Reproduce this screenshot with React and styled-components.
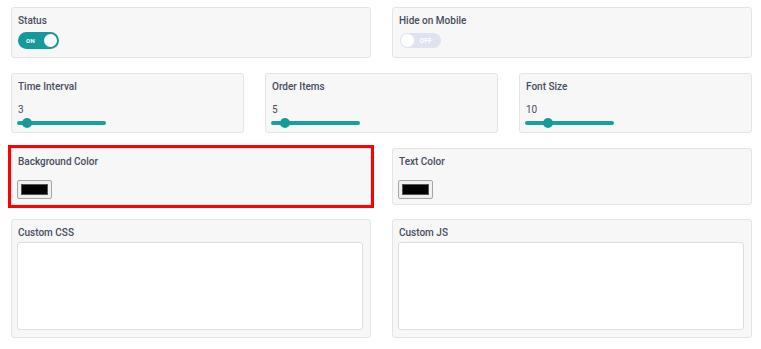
import React, { useState } from "react";
import styled, { createGlobalStyle } from "styled-components";

const GlobalStyle = createGlobalStyle`
  body {
    margin: 0;
    background: #ffffff;
    font-family: Roboto, "Liberation Sans", Arial, sans-serif;
  }
`;

const Page = styled.div`
  width: 761px;
  box-sizing: border-box;
  padding: 7px 9px 0 11px;
  display: flex;
  flex-direction: column;
  gap: 15px;
`;

const Row = styled.div`
  display: grid;
  grid-template-columns: repeat(${(p) => p.cols}, 1fr);
  column-gap: 21px;
  margin-top: ${(p) => p.pull || 0}px;
`;

const Card = styled.div`
  box-sizing: border-box;
  height: ${(p) => p.h}px;
  background: #f7f7f7;
  border: 1px solid #e4e4e4;
  border-radius: ${(p) => (p.highlight ? 0 : 3)}px;
  padding: 7px 7px 0 5px;
  display: flex;
  flex-direction: column;
  outline: ${(p) => (p.highlight ? "3px solid #ff0000" : "none")};
  outline-offset: 0;
`;

const Label = styled.div`
  font-size: 10px;
  line-height: 12px;
  font-weight: 500;
  color: #474c5e;
  padding-left: 1px;
`;

const Toggle = styled.div`
  margin-top: ${(p) => (p.on ? 5 : 6)}px;
  width: 41px;
  height: ${(p) => (p.on ? 17 : 15)}px;
  margin-left: ${(p) => (p.on ? 1 : 2)}px;
  border-radius: 10px;
  background: ${(p) => (p.on ? "#16999b" : "#e0e2f0")};
  display: flex;
  align-items: center;
  flex-direction: ${(p) => (p.on ? "row" : "row-reverse")};
  justify-content: space-between;
  padding: 0 2px 0 ${(p) => (p.on ? 8 : 1)}px;
  box-sizing: border-box;
  cursor: pointer;
`;

const ToggleText = styled.span`
  font-size: ${(p) => (p.on ? 6 : 6.5)}px;
  font-weight: 700;
  color: #ffffff;
  letter-spacing: 0.3px;
  margin-right: ${(p) => (p.on ? 0 : 7)}px;
`;

const Knob = styled.span`
  width: 13px;
  height: 13px;
  border-radius: 50%;
  background: #ffffff;
`;

const Value = styled.div`
  margin-top: 11px;
  font-size: 10px;
  line-height: 12px;
  color: #474c5e;
  padding-left: 1px;
`;

const Slider = styled.div`
  position: relative;
  margin-top: 2px;
  width: 89px;
  height: 10px;
  display: flex;
  align-items: center;
`;

const Track = styled.div`
  width: 100%;
  height: 4px;
  border-radius: 2px;
  background: #16a0a0;
`;

const Thumb = styled.span`
  position: absolute;
  top: 0;
  width: 10px;
  height: 10px;
  border-radius: 50%;
  background: #16999b;
`;

const Swatch = styled.button`
  margin-top: 12px;
  width: 35px;
  height: 19px;
  padding: 3px;
  box-sizing: border-box;
  border: 1px solid #a5a5a5;
  border-radius: 2px;
  background: #efefef;
  display: flex;
  cursor: pointer;
`;

const SwatchFill = styled.span`
  flex: 1;
  background: ${(p) => p.color};
  border: 1px solid #555;
`;

const CodeBox = styled.textarea`
  margin-top: 3px;
  height: 88px;
  width: 100%;
  box-sizing: border-box;
  border: 1px solid #dedede;
  border-radius: 3px;
  background: #ffffff;
  resize: none;
  outline: none;
`;

function SwitchField({ label, initial }) {
  const [on, setOn] = useState(initial);
  return (
    <Card h={51}>
      <Label>{label}</Label>
      <Toggle on={on} onClick={() => setOn(!on)}>
        <ToggleText on={on}>{on ? "ON" : "OFF"}</ToggleText>
        <Knob />
      </Toggle>
    </Card>
  );
}

function RangeField({ label, value, min, max }) {
  const pct = (value - min) / (max - min);
  return (
    <Card h={60}>
      <Label>{label}</Label>
      <Value>{value}</Value>
      <Slider>
        <Track />
        <Thumb style={{ left: `${pct * 79}px` }} />
      </Slider>
    </Card>
  );
}

function ColorField({ label, color, highlight }) {
  return (
    <Card h={57} highlight={highlight}>
      <Label>{label}</Label>
      <Swatch>
        <SwatchFill color={color} />
      </Swatch>
    </Card>
  );
}

function CodeField({ label }) {
  return (
    <Card h={119}>
      <Label>{label}</Label>
      <CodeBox />
    </Card>
  );
}

export default function App() {
  return (
    <>
      <GlobalStyle />
      <Page>
        <Row cols={2}>
          <SwitchField label="Status" initial={true} />
          <SwitchField label="Hide on Mobile" initial={false} />
        </Row>
        <Row cols={3}>
          <RangeField label="Time Interval" value={3} min={0} max={44} />
          <RangeField label="Order Items" value={5} min={0} max={44} />
          <RangeField label="Font Size" value={10} min={0} max={44} />
        </Row>
        <Row cols={2}>
          <ColorField label="Background Color" color="#000000" highlight />
          <ColorField label="Text Color" color="#000000" />
        </Row>
        <Row cols={2} pull={-1}>
          <CodeField label="Custom CSS" />
          <CodeField label="Custom JS" />
        </Row>
      </Page>
    </>
  );
}
